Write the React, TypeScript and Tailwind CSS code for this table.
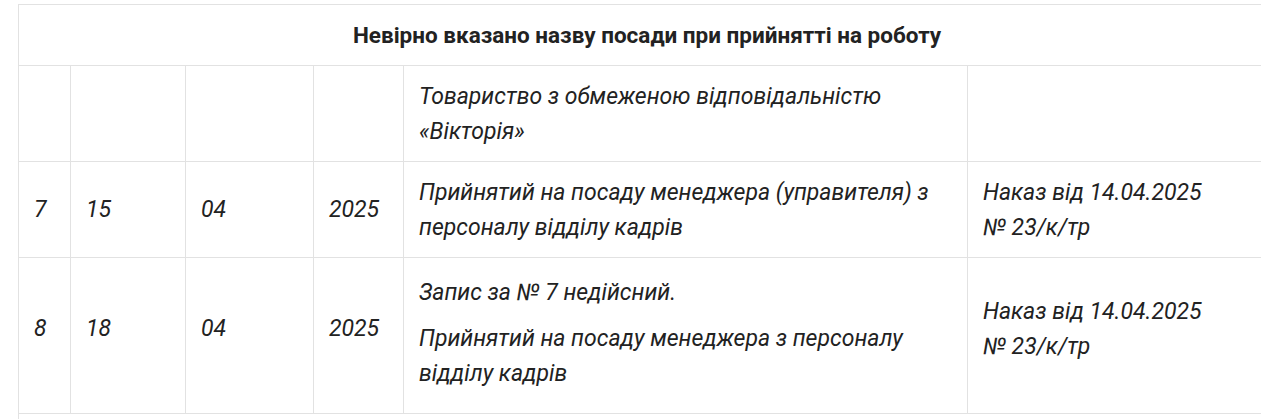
const cell = "border border-[#e2e2e2] px-[15px] align-middle";

const rows = [
  { no: "7", day: "15", month: "04", year: "2025" },
  { no: "8", day: "18", month: "04", year: "2025" },
];

export default function App() {
  return (
    <div
      className="w-[1261px] h-[419px] overflow-hidden bg-white pt-[4px] pl-[18px] text-[#222222]"
      style={{ fontFamily: "Roboto, 'Noto Sans', sans-serif" }}
    >
      <table className="table-fixed border-collapse w-[1257px] text-[23px] leading-[35px]">
        <colgroup>
          <col className="w-[52px]" />
          <col className="w-[115px]" />
          <col className="w-[128px]" />
          <col className="w-[90px]" />
          <col className="w-[564px]" />
          <col className="w-[308px]" />
        </colgroup>
        <tbody>
          <tr className="h-[61px]">
            <td colSpan={6} className={`${cell} text-center font-bold text-[22.5px]`}>
              Невірно вказано назву посади при прийнятті на роботу
            </td>
          </tr>
          <tr className="h-[96px] italic">
            <td className={cell}></td>
            <td className={cell}></td>
            <td className={cell}></td>
            <td className={cell}></td>
            <td className={cell}>
              Товариство з обмеженою відповідальністю «Вікторія»
            </td>
            <td className={cell}></td>
          </tr>
          <tr className="h-[96px] italic">
            <td className={cell}>{rows[0].no}</td>
            <td className={cell}>{rows[0].day}</td>
            <td className={cell}>{rows[0].month}</td>
            <td className={cell}>{rows[0].year}</td>
            <td className={cell}>
              Прийнятий на посаду менеджера (управителя) з персоналу відділу кадрів
            </td>
            <td className={cell}>
              Наказ від 14.04.2025
              <br />№ 23/к/тр
            </td>
          </tr>
          <tr className="h-[156px] italic">
            <td className={`${cell} pb-[14px]`}>{rows[1].no}</td>
            <td className={`${cell} pb-[14px]`}>{rows[1].day}</td>
            <td className={`${cell} pb-[14px]`}>{rows[1].month}</td>
            <td className={`${cell} pb-[14px]`}>{rows[1].year}</td>
            <td className={`${cell} pb-[5px]`}>
              <div className="flex flex-col gap-[11px]">
                <p>Запис за № 7 недійсний.</p>
                <p>Прийнятий на посаду менеджера з персоналу відділу кадрів</p>
              </div>
            </td>
            <td className={`${cell} pb-[14px]`}>
              Наказ від 14.04.2025
              <br />№ 23/к/тр
            </td>
          </tr>
          <tr className="h-[20px]">
            <td className="border-l border-[#e2e2e2]" colSpan={6}></td>
          </tr>
        </tbody>
      </table>
    </div>
  );
}
